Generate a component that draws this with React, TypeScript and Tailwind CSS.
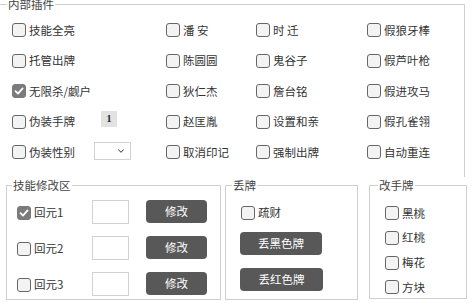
import React from "react";
import { ChevronDown } from "lucide-react";

const font = { fontFamily: '"Noto Sans CJK SC", "Noto Sans", sans-serif' };

const Box = ({ checked = false }: { checked?: boolean }) => (
  <span
    className={
      "flex h-[14px] w-[14px] shrink-0 items-center justify-center rounded-[3px] border-[1.5px] " +
      (checked ? "border-[#7b7b7b] bg-[#7b7b7b]" : "border-[#666] bg-[#f3f3f3]")
    }
  >
    {checked && (
      <svg width="10" height="10" viewBox="0 0 10 10">
        <polyline points="1.5,5.2 4,7.6 8.6,2.4" fill="none" stroke="#fff" strokeWidth="1.8" strokeLinecap="round" strokeLinejoin="round" />
      </svg>
    )}
  </span>
);

const Check = ({ label, checked }: { label: string; checked?: boolean }) => (
  <label className="flex items-center gap-[3px] whitespace-pre text-[11.5px] text-[#333]">
    <Box checked={checked} />
    <span className="leading-none">{label}</span>
  </label>
);

const Btn = ({ text, w }: { text: string; w: string }) => (
  <button className={"flex h-[23px] items-center justify-center rounded-[4px] bg-[#585858] text-[11.5px] text-white " + w}>
    {text}
  </button>
);

const rows: string[][] = [
  ["技能全亮", "潘 安", "时 迁", "假狼牙棒"],
  ["托管出牌", "陈圆圆", "鬼谷子", "假芦叶枪"],
  ["无限杀/觑户", "狄仁杰", "詹台铭", "假进攻马"],
  ["伪装手牌", "赵匡胤", "设置和亲", "假孔雀翎"],
  ["伪装性别", "取消印记", "强制出牌", "自动重连"],
];

export default function App() {
  return (
    <div className="relative h-[303px] w-[472px] overflow-hidden bg-white" style={font}>
      {/* 内部插件 */}
      <fieldset className="-ml-px -mt-[4px] h-[181px] w-[466px] border border-b-0 border-[#cfcfcf]">
        <legend className="ml-[7px] px-[1px] text-[11.5px] leading-[16px] text-[#444]">内部插件</legend>
        <div className="grid grid-cols-[154px_90px_111px_1fr] pl-[12px] pt-[3px]">
          {rows.map((r, i) =>
            r.map((t, j) => (
              <div key={i + "-" + j} className="flex h-[30.5px] items-center">
                <Check label={t} checked={i === 2 && j === 0} />
                {i === 3 && j === 0 && (
                  <span className="ml-[26px] -mt-[6px] flex h-[16px] w-[16px] items-center justify-center bg-[#e2e2e2] text-[10px] font-bold text-[#222]" style={{ fontFamily: '"Liberation Serif", serif' }}>
                    1
                  </span>
                )}
                {i === 4 && j === 0 && (
                  <span className="ml-[19px] -mt-[3px] flex h-[18px] w-[37px] items-center justify-end border border-[#d2d2d2] bg-white pr-[4px]">
                    <ChevronDown size={10} strokeWidth={2.5} color="#555" />
                  </span>
                )}
              </div>
            ))
          )}
        </div>
      </fieldset>

      <div className="flex">
        {/* 技能修改区 */}
        <fieldset className="ml-[6px] h-[123px] w-[215px] border border-[#cfcfcf]">
          <legend className="ml-[5px] px-[1px] text-[11.5px] leading-[16px] text-[#444]">技能修改区</legend>
          <div className="flex flex-col pl-[10px] pt-[2px]">
            {["回元1", "回元2", "回元3"].map((t, i) => (
              <div key={t} className="flex h-[36px] items-center">
                <div className="w-[75px]">
                  <Check label={t} checked={i === 0} />
                </div>
                <span className="-mt-[3px] h-[24px] w-[37px] border border-[#d2d2d2] bg-white" />
                <div className="ml-[17px] -mt-[3px]">
                  <Btn text="修改" w="w-[61px]" />
                </div>
              </div>
            ))}
          </div>
        </fieldset>

        {/* 丢牌 */}
        <fieldset className="ml-[4px] h-[123px] w-[133px] border border-[#cfcfcf]">
          <legend className="ml-[6px] px-[1px] text-[11.5px] leading-[16px] text-[#444]">丢牌</legend>
          <div className="flex flex-col pl-[14px]">
            <div className="mt-[10px] flex h-[20px] items-center pl-[1px]">
              <Check label="疏财" />
            </div>
            <div className="mt-[9px]">
              <Btn text="丢黑色牌" w="w-[82px]" />
            </div>
            <div className="mt-[13px]">
              <Btn text="丢红色牌" w="w-[83px]" />
            </div>
          </div>
        </fieldset>

        {/* 改手牌 */}
        <fieldset className="ml-[11px] h-[122px] w-[98px] border border-[#cfcfcf]">
          <legend className="ml-[8px] px-[1px] text-[11.5px] leading-[16px] text-[#444]">改手牌</legend>
          <div className="flex flex-col pl-[15px] pt-[8px]">
            {["黑桃", "红桃", "梅花", "方块"].map((t) => (
              <div key={t} className="flex h-[24.7px] items-center">
                <Check label={t} />
              </div>
            ))}
          </div>
        </fieldset>
      </div>
    </div>
  );
}
